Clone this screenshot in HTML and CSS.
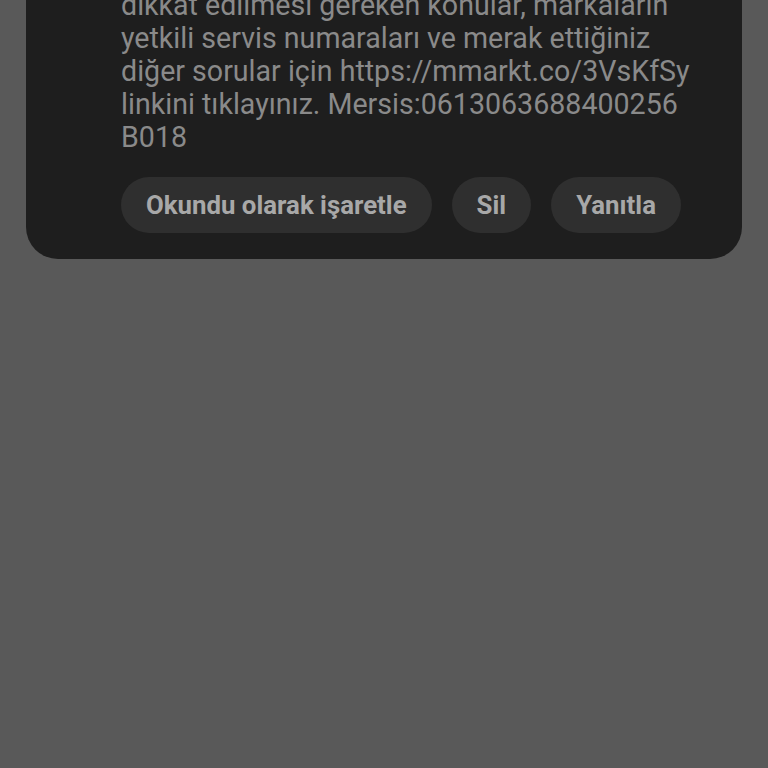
FILE: index.html
```html
<!DOCTYPE html>
<html lang="tr">
<head>
<meta charset="utf-8">
<link rel="stylesheet" href="styles.css">
</head>
<body>
<div class="card">
  <p class="message">dikkat edilmesi gereken konular, markaların<br>yetkili servis numaraları ve merak ettiğiniz<br>diğer sorular için https://mmarkt.co/3VsKfSy<br>linkini tıklayınız. Mersis:0613063688400256<br>B018</p>
  <div class="actions">
    <span class="btn">Okundu olarak işaretle</span>
    <span class="btn">Sil</span>
    <span class="btn">Yanıtla</span>
  </div>
</div>
</body>
</html>
```
FILE: styles.css
```css
html, body {
  margin: 0;
  padding: 0;
  background: #595959;
  width: 768px;
  height: 768px;
  overflow: hidden;
}
.card {
  margin: -11px 26px 0 26px;
  background: #1e1e1e;
  border-radius: 0 0 32px 32px;
  padding: 0 0 26px 95px;
  font-family: Roboto, "Liberation Sans", sans-serif;
}
.message {
  margin: 0;
  font-size: 28.6px;
  line-height: 33px;
  color: #8a8a8a;
  white-space: nowrap;
}
.actions {
  display: flex;
  gap: 20px;
  margin-top: 23px;
}
.btn {
  display: flex;
  align-items: center;
  height: 56px;
  padding: 0 25px;
  border-radius: 28px;
  background: #2f2f2f;
  color: #a8a8a8;
  font-size: 25.8px;
  font-weight: 700;
}
```
